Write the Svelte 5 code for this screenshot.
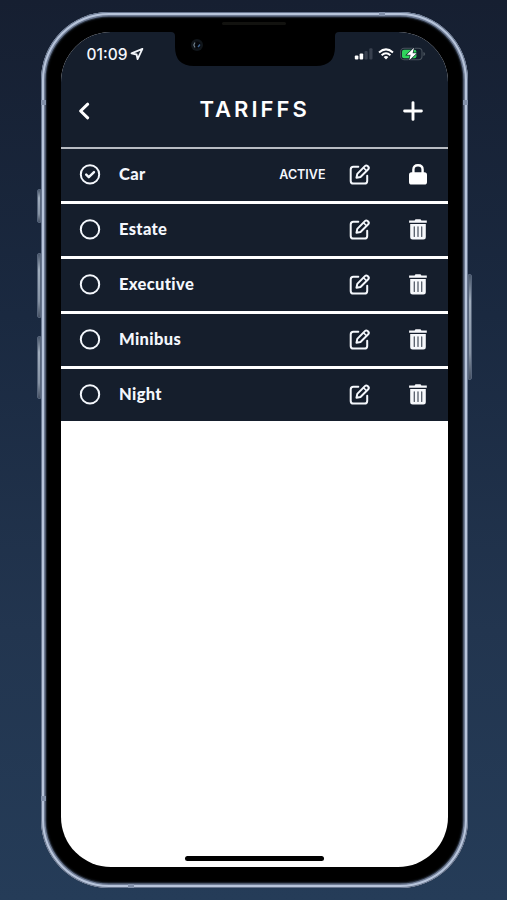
<script>
  let tariffs = $state([
    { id: 'car', name: 'Car', locked: true },
    { id: 'estate', name: 'Estate', locked: false },
    { id: 'executive', name: 'Executive', locked: false },
    { id: 'minibus', name: 'Minibus', locked: false },
    { id: 'night', name: 'Night', locked: false }
  ])
  let activeId = $state('car')

  function removeTariff(t) {
    if (t.locked) return
    tariffs = tariffs.filter(x => x.id !== t.id)
  }
</script>

<div class="backdrop">
  <div class="phone">
    <span class="side-btn mute"></span>
    <span class="side-btn vol-up"></span>
    <span class="side-btn vol-down"></span>
    <span class="side-btn power"></span>
    <span class="band band-tl"></span>
    <span class="band band-bl"></span>
    <span class="band band-top"></span>
    <span class="band band-bottom"></span>
    <span class="band band-tr"></span>
    <span class="speaker"></span>

    <div class="screen">
      <svg class="notch" width="168" height="36" viewBox="0 0 168 36">
        <path d="M0 0H168V1Q164 1 164 5V16Q164 35 145 35H23Q4 35 4 16V5Q4 1 0 1Z" fill="#000" />
        <circle cx="26" cy="14" r="6" fill="#10151a" />
        <circle cx="26" cy="14" r="3.6" fill="#05070b" />
        <path d="M24 11.5l-1.2 2.5 1.2 2.5" stroke="#71808b" stroke-width="1.2" fill="none" />
        <path d="M27 16l2-2.5" stroke="#3f638f" stroke-width="1.5" />
      </svg>

      <div class="status">
        <span class="time">01:09</span>
        <svg class="location" width="14" height="14" viewBox="0 0 14 14">
          <path d="M12.4 1.9L1.5 6.3L6.6 7.5L7.6 12.2Z" fill="none" stroke="#f2f5fa" stroke-width="1.8" stroke-linejoin="round" />
        </svg>
        <svg class="signal" width="19" height="12" viewBox="0 0 19 12">
          <rect x="0.8" y="7.5" width="3.6" height="4" rx="1" fill="#fff" />
          <rect x="5.6" y="5.5" width="3.6" height="6" rx="1" fill="#fff" />
          <rect x="10.5" y="3" width="3.2" height="8.5" rx="1" fill="#38404e" />
          <rect x="15.3" y="0.2" width="3.2" height="11.3" rx="1" fill="#38404e" />
        </svg>
        <svg class="wifi" width="16" height="12" viewBox="0 0 16 12">
          <g fill="none" stroke="#fff" stroke-width="2">
            <path d="M1 4.4Q8 -1.6 15 4.4" />
            <path d="M3.6 7.2Q8 3.4 12.4 7.2" />
          </g>
          <path d="M5.6 9Q8 7 10.4 9L8 11.6Z" fill="#fff" />
        </svg>
        <svg class="battery" width="26" height="14" viewBox="0 0 26 14">
          <rect x="0.6" y="1.3" width="21.4" height="11.4" rx="3.4" fill="none" stroke="#48525c" stroke-width="1.1" />
          <path d="M23.4 5V9Q25.2 8.5 25.2 7T23.4 5Z" fill="#48525c" />
          <rect x="2" y="2.7" width="14.4" height="8.6" rx="2" fill="#2fd35b" />
          <path d="M14 0.8L6.8 7.8H10.6L9.3 13.2L16.6 6.2H12.6Z" fill="#fff" stroke="#16212d" stroke-width="1.3" paint-order="stroke" />
        </svg>
      </div>

      <header>
        <button class="back" aria-label="Back">
          <svg width="12" height="18" viewBox="0 0 12 18">
            <path d="M9.7 2.2L2.6 9L9.7 15.8" fill="none" stroke="#fff" stroke-width="3" stroke-linecap="round" stroke-linejoin="round" />
          </svg>
        </button>
        <h1>TARIFFS</h1>
        <button class="add" aria-label="Add tariff">
          <svg width="20" height="20" viewBox="0 0 20 20">
            <path d="M10 1.6V18.4M1.6 10H18.4" stroke="#fff" stroke-width="2.9" stroke-linecap="round" />
          </svg>
        </button>
      </header>

      <ul>
        {#each tariffs as t (t.id)}
          <li>
            <button class="radio" aria-label="Activate {t.name}" onclick={() => (activeId = t.id)}>
              <svg width="22" height="22" viewBox="0 0 22 22" fill="none" stroke="#f4f7fc" stroke-width="2">
                <circle cx="11" cy="11.4" r="9.2" />
                {#if t.id === activeId}
                  <path d="M7.2 11.6L9.8 14.2L15 9.1" stroke-width="2.4" stroke-linecap="round" stroke-linejoin="round" />
                {/if}
              </svg>
            </button>
            <span class="name">{t.name}</span>
            {#if t.id === activeId}
              <span class="active">ACTIVE</span>
            {/if}
            <button class="edit" aria-label="Edit {t.name}">
              <svg width="22" height="22" viewBox="0 0 22 22" fill="none" stroke="#f4f7fc" stroke-width="2" stroke-linejoin="round" stroke-linecap="round">
                <path d="M9.3 3.7H4.4Q1.7 3.7 1.7 6.4V17.9Q1.7 20.6 4.4 20.6H15.5Q18.2 20.6 18.2 17.9V12.7" />
                <path d="M7.5 14.8L8.3 10.9L15.9 3.1Q17.2 1.8 18.7 3.1L19.1 3.5Q20.5 4.9 19.2 6.3L11.5 14Z" />
                <path d="M14.6 4.9L17.6 7.8" stroke-width="1.5" />
              </svg>
            </button>
            <button class="remove" aria-label="Delete {t.name}" onclick={() => removeTariff(t)}>
              {#if t.locked}
                <svg width="20" height="22" viewBox="0 0 20 22">
                  <path d="M5.4 10V6.6Q5.4 2.3 10 2.3T14.6 6.6V10" fill="none" stroke="#fff" stroke-width="2.4" />
                  <rect x="1" y="9.3" width="18" height="12.2" rx="2.6" fill="#fff" />
                </svg>
              {:else}
                <svg width="20" height="22" viewBox="0 0 20 22">
                  <path d="M6.6 2.6L7.5 1.2H12.5L13.4 2.6H18.8V4.8H1.1V2.6Z" fill="#f6f8fb" />
                  <path d="M2.2 6H17.8V18.9Q17.8 21.4 15.3 21.4H4.7Q2.2 21.4 2.2 18.9Z" fill="#f6f8fb" />
                  <path d="M6.3 8.8V18.4M10 8.8V18.4M13.7 8.8V18.4" stroke="#555d69" stroke-width="1.3" stroke-linecap="round" />
                </svg>
              {/if}
            </button>
          </li>
        {/each}
      </ul>

      <span class="home"></span>
    </div>
  </div>
</div>

<style>
  :global(body) { margin: 0; }

  .backdrop {
    box-sizing: border-box;
    width: 507px; height: 900px;
    padding: 12px 39px 12px 41px;
    overflow: hidden;
    background: linear-gradient(#161f31, #1a2940 35%, #22354f 70%, #253c58);
    font-family: Lato, "Open Sans", sans-serif;
    color: #f4f7fc;
  }
  .phone {
    position: relative;
    box-sizing: border-box;
    height: 875.5px;
    padding: 20px 20.5px 21px 20px;
    border-radius: 68px;
    background: #000;
    box-shadow:
      inset 0 0 0 1px #66748d,
      inset 0 0 0 3px #b7c4da,
      inset 0 0 0 4.5px #6e7b94,
      inset 0 0 0 5.5px #262e3a,
      inset 0 0 2px 6px #10151c;
  }

  .side-btn {
    position: absolute;
    width: 3px;
    background: linear-gradient(#48566a, #a0adbd 25%, #8794a5 75%, #445063);
    border: 1px solid #56647a;
    box-sizing: border-box;
  }
  .mute, .vol-up, .vol-down { left: -4px; width: 4px; border-radius: 2px 0 0 2px; }
  .mute { top: 177px; height: 34px; }
  .vol-up { top: 241px; height: 65px; }
  .vol-down { top: 324px; height: 63px; }
  .power { right: -4px; top: 262px; width: 4px; height: 106px; border-radius: 0 2px 2px 0; }

  .band { position: absolute; background: #8391aa; }
  .band-tl, .band-bl { left: 0; width: 5px; height: 5px; }
  .band-tl { top: 88px; }
  .band-bl { bottom: 87px; }
  .band-tr { right: 0; top: 88px; width: 5px; height: 5px; }
  .band-top { top: 0; right: 83px; width: 6px; height: 4px; }
  .band-bottom { bottom: 0; left: 87px; width: 6px; height: 4px; }
  .speaker {
    position: absolute;
    top: 10px; left: 181px;
    width: 64px; height: 3px;
    border-radius: 2px;
    background: #12120f;
  }

  .screen {
    position: relative;
    height: 834.5px;
    border-radius: 50px;
    background: #fff;
    overflow: hidden;
    display: flex;
    flex-direction: column;
  }
  .notch { position: absolute; top: -1px; left: 109.5px; }

  .status {
    display: flex;
    align-items: center;
    height: 44px;
    padding: 0 21.5px 0 25.5px;
    background: #151e2c;
  }
  .time { font: 500 15.5px/20px Inter, sans-serif; padding-top: 1px; }
  .location { margin-left: 3px; }
  .signal { margin-left: auto; }
  .wifi { margin: 0 6px 0 5px; }

  header {
    display: flex;
    align-items: center;
    height: 70.5px;
    padding: 0 24.5px 0 16.5px;
    box-sizing: border-box;
    background: #151e2c;
  }
  h1 {
    margin: 0 auto 5px 110px;
    font: 600 22px/28px Inter, sans-serif;
    letter-spacing: 3px;
    color: #fff;
  }

  button {
    display: flex;
    padding: 0;
    border: none;
    background: none;
    cursor: pointer;
  }

  ul {
    display: flex;
    flex-direction: column;
    gap: 3px;
    margin: 0;
    padding: 0;
    list-style: none;
    border-top: 2px solid #b8bcc3;
  }
  li {
    display: flex;
    align-items: center;
    box-sizing: border-box;
    height: 52px;
    padding: 0 19.5px 1px 18px;
    background: #151e2c;
  }
  .name {
    margin-left: 18px;
    font-size: 16.5px;
    font-weight: 900;
    line-height: 22px;
    letter-spacing: .35px;
    font-variant-ligatures: none;
  }
  .active { margin-left: auto; padding-top: 1px; font: 600 12.5px/18px Inter, sans-serif; }
  .edit { margin-left: auto; }
  .active + .edit { margin-left: 23.5px; }
  .remove { margin-left: 37px; }

  .home {
    width: 139px; height: 4.5px;
    margin: auto auto 6px 124px;
    border-radius: 3px;
    background: #000;
  }
</style>
